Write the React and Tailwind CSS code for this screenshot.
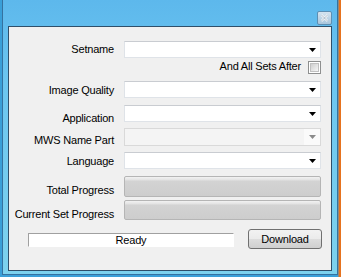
import React from "react";

function Arrow({ color = "#000" }) {
  return (
    <svg width="7" height="4" viewBox="0 0 7 4">
      <polygon points="0,0 7,0 3.5,4" fill={color} />
    </svg>
  );
}

function Combo({ disabled = false, h = "h-[17px]" }) {
  if (disabled) {
    return (
      <div className={`w-[197px] ${h} border border-[#d9d9d9] bg-[#f4f4f4] flex justify-end`}>
        <div className="w-[16px] h-full bg-[#fafafa] flex items-center justify-center">
          <Arrow color="#8a8a8a" />
        </div>
      </div>
    );
  }
  return (
    <div className={`w-[197px] ${h} border border-[#dfe3e8] border-t-[#c9ccd1] bg-white flex items-center justify-end pr-[4px]`}>
      <Arrow />
    </div>
  );
}

function Progress({ h }) {
  return (
    <div className={`w-[197px] ${h} rounded-[2px] border border-[#b5b5b5] bg-[linear-gradient(to_bottom,#f2f2f2_0px,#e2e2e2_3px,#d3d3d3_4px,#cdcdcd_100%)]`} />
  );
}

function Row({ label, mt, lmt, h, children }) {
  return (
    <div className={`flex ${h} ${mt}`}>
      <div className={`w-[105px] text-right leading-[13px] whitespace-nowrap ${lmt}`}>{label}</div>
      <div className="ml-[10px]">{children}</div>
    </div>
  );
}

export default function App() {
  return (
    <div
      className="relative w-[341px] h-[277px] overflow-hidden bg-[linear-gradient(to_right,#3a9fd8_0px,#3a9fd8_338px,#e6731f_339px)]"
      style={{ fontFamily: '"Liberation Sans", Arial, sans-serif' }}
    >
      <div className="ml-[2px] w-[336px] h-[275px] border border-t-0 border-[#3572a0] bg-[linear-gradient(to_bottom,#5db8ec_0%,#6cc6f0_30%,#7dd2ee_100%)] pl-[5px]">
        <div className="h-[26px] flex justify-end pr-[5px] pt-[11px]">
          <div className="w-[15px] h-[14px] rounded-[2px] border border-[#5d8fb3] bg-[linear-gradient(to_bottom,#d4e4f0,#a9c6dc)] flex items-center justify-center">
            <svg width="9" height="8" viewBox="0 0 9 8">
              <path d="M1.5 1 L7.5 7 M7.5 1 L1.5 7" stroke="#ffffff" strokeWidth="2" />
              <path d="M1.5 1 L7.5 7 M7.5 1 L1.5 7" stroke="#6d8aa3" strokeWidth="0.6" />
            </svg>
          </div>
        </div>
        <div className="w-[324px] h-[245px] border border-[#2f4f6a] bg-[#f0f0f0] text-[11px] tracking-[-0.2px] text-black flex flex-col">
          <Row label="Setname" mt="mt-[14px]" lmt="mt-[2px]" h="h-[17px]">
            <Combo />
          </Row>
          <div className="mt-[2px] h-[14px] flex justify-end items-start pr-[10px]">
            <div className="leading-[13px] mt-[0px]">And All Sets After</div>
            <div className="ml-[7px] mt-[1px] w-[13px] h-[13px] border border-[#8e8f8f] bg-white p-[1px]">
              <div className="w-full h-full bg-[linear-gradient(135deg,#cfcfcf,#f6f6f6)] border border-[#c0c0c0]" />
            </div>
          </div>
          <Row label="Image Quality" mt="mt-[7px]" lmt="mt-[3px]" h="h-[17px]">
            <Combo />
          </Row>
          <Row label="Application" mt="mt-[7px]" lmt="mt-[7px]" h="h-[17px]">
            <Combo />
          </Row>
          <Row label="MWS Name Part" mt="mt-[6px]" lmt="mt-[6px]" h="h-[18px]">
            <Combo disabled h="h-[18px]" />
          </Row>
          <Row label="Language" mt="mt-[6px]" lmt="mt-[3px]" h="h-[17px]">
            <Combo />
          </Row>
          <Row label="Total Progress" mt="mt-[7px]" lmt="mt-[8px]" h="h-[21px]">
            <Progress h="h-[21px]" />
          </Row>
          <Row label="Current Set Progress" mt="mt-[3px]" lmt="mt-[8px]" h="h-[20px]">
            <Progress h="h-[20px]" />
          </Row>
          <div className="mt-[9px] h-[20px] flex items-start">
            <div className="ml-[19px] mt-[4px] w-[206px] h-[14px] border border-[#a0a0a0] border-r-white border-b-white bg-white flex items-center justify-center leading-[13px]">
              Ready
            </div>
            <div className="ml-[14px] w-[74px] h-[20px] rounded-[3px] border border-[#707070] bg-[linear-gradient(to_bottom,#f2f2f2_0%,#ebebeb_50%,#dddddd_51%,#cfcfcf_100%)] flex items-center justify-center leading-[13px]">
              Download
            </div>
          </div>
        </div>
      </div>
    </div>
  );
}
